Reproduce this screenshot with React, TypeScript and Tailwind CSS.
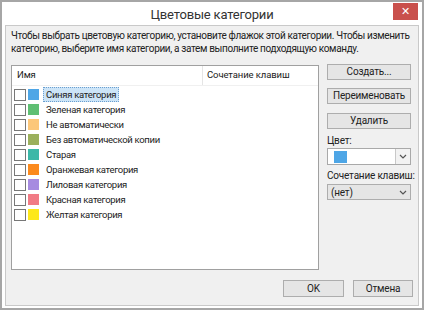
import React from 'react';

const categories = [
  { name: 'Синяя категория', color: '#4ea6e6', selected: true },
  { name: 'Зеленая категория', color: '#5fbf73' },
  { name: 'Не автоматически', color: '#fcc77a' },
  { name: 'Без автоматической копии', color: '#9bb05c' },
  { name: 'Старая', color: '#3cb8a8' },
  { name: 'Оранжевая категория', color: '#fb8a1e' },
  { name: 'Лиловая категория', color: '#a68be0' },
  { name: 'Красная категория', color: '#f17b85' },
  { name: 'Желтая категория', color: '#fde81a' },
];

const Chevron: React.FC = () => (
  <svg width="8" height="5" viewBox="0 0 8 5" className="text-[#555]">
    <path d="M1 1 L4 4 L7 1" fill="none" stroke="currentColor" strokeWidth="1.2" />
  </svg>
);

const Button: React.FC<{ label: string; className?: string }> = ({ label, className = '' }) => (
  <button
    className={`h-[16px] border border-[#adadad] bg-[#e5e5e5] text-[10px] tracking-[-0.2px] leading-none text-[#222] flex items-center justify-center ${className}`}
  >
    {label}
  </button>
);

const App: React.FC = () => {
  return (
    <div
      className="w-[424px] h-[310px] bg-[#a6a6a6] p-[2px] flex overflow-hidden"
      style={{ fontFamily: 'Roboto, "Noto Sans", sans-serif' }}
    >
      <div className="flex-1 min-w-0 bg-white flex flex-col px-[3px] pb-[2px]">
        {/* title bar */}
        <div className="relative h-[23px] flex items-center justify-center">
          <span className="text-[13px] tracking-[-0.2px] text-[#333] pt-[2px]">Цветовые категории</span>
          <div className="absolute right-[1px] top-[1px] w-[25px] h-[17px] bg-[#c9504c] flex items-center justify-center text-white text-[11px] leading-none">
            ✕
          </div>
        </div>

        {/* content */}
        <div className="flex-1 min-w-0 bg-[#f0f0f0] border border-[#c9c9c9] flex flex-col px-[5px] text-[#222]">
          <p className="text-[10px] leading-[13px] mt-[3px] tracking-[-0.35px] whitespace-nowrap">
            Чтобы выбрать цветовую категорию, установите флажок этой категории. Чтобы изменить
            <br />
            категорию, выберите имя категории, а затем выполните подходящую команду.
          </p>

          <div className="flex gap-[8px] mt-[10px]">
            {/* list */}
            <div className="w-[308px] h-[205px] bg-white border border-[#a0a0a0] flex flex-col">
              <div className="flex h-[20px] text-[9.5px] tracking-[-0.1px] items-center border-b border-[#f0f0f0]">
                <div className="w-[191px] pl-[5px] border-r border-[#e5e5e5] h-full flex items-center">Имя</div>
                <div className="pl-[4px]">Сочетание клавиш</div>
              </div>
              <div className="flex flex-col pt-[1px]">
                {categories.map((c) => (
                  <div key={c.name} className="flex items-center h-[15px] text-[9.5px] tracking-[-0.3px]">
                    <div className="ml-[2px] w-[12px] h-[12px] border border-[#777] bg-white" />
                    <div className="ml-[2px] w-[11px] h-[11px]" style={{ backgroundColor: c.color }} />
                    <span
                      className={`ml-[4px] px-[2px] leading-[13px] ${
                        c.selected ? 'bg-[#cce4f7] border border-dotted border-[#6a9fd0]' : 'border border-transparent'
                      }`}
                    >
                      {c.name}
                    </span>
                  </div>
                ))}
              </div>
            </div>

            {/* right column */}
            <div className="w-[84px] flex flex-col text-[10px] tracking-[-0.2px] -mt-[1px]">
              <Button label="Создать..." className="w-full" />
              <Button label="Переименовать" className="w-full mt-[8px]" />
              <Button label="Удалить" className="w-full mt-[9px]" />
              <div className="mt-[5px] leading-[13px]">Цвет:</div>
              <div className="mt-[1px] h-[17px] bg-white border border-[#a9a9a9] flex">
                <div className="flex-1 flex items-center pl-[6px]">
                  <div className="w-[13px] h-[12px] bg-[#4ea6e6]" />
                </div>
                <div className="w-[15px] border-l border-[#c8c8c8] bg-[#f2f2f2] flex items-center justify-center">
                  <Chevron />
                </div>
              </div>
              <div className="mt-[4px] leading-[13px] whitespace-nowrap">Сочетание клавиш:</div>
              <div className="mt-[2px] h-[16px] bg-[#e5e5e5] border border-[#adadad] flex items-center justify-between px-[3px]">
                <span>(нет)</span>
                <Chevron />
              </div>
            </div>
          </div>

          <div className="flex justify-end gap-[9px] mt-[10px]">
            <Button label="OK" className="w-[61px] h-[17px] border-[#3c7fb1]" />
            <Button label="Отмена" className="w-[60px] h-[17px]" />
          </div>
        </div>
      </div>
    </div>
  );
};

export default App;
